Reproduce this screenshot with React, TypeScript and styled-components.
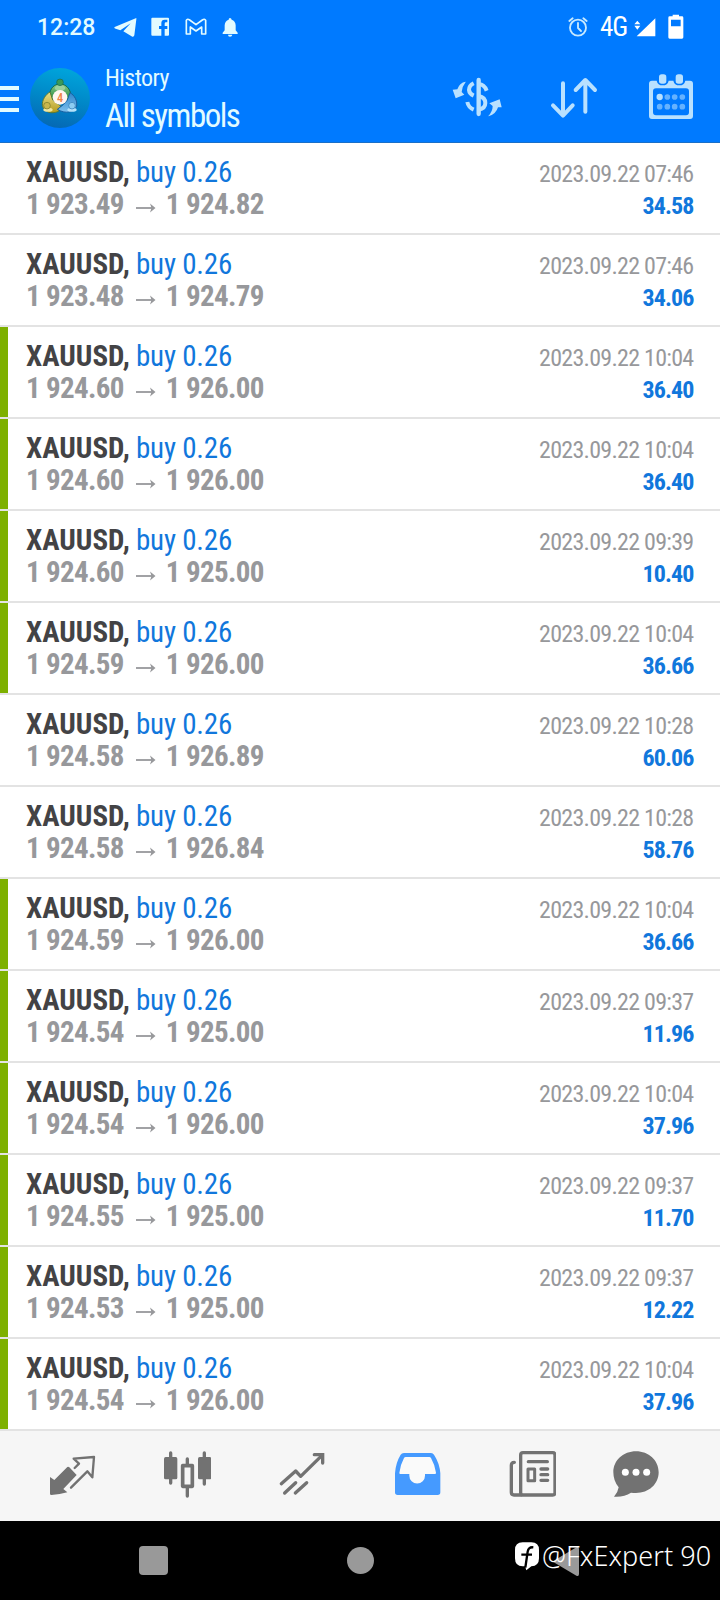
import React from "react";
import styled, { createGlobalStyle } from "styled-components";

const GlobalStyle = createGlobalStyle`
  * { box-sizing: border-box; }
  body { margin: 0; background: #fff; }
`;

const Screen = styled.div`
  width: 720px;
  height: 1600px;
  display: flex;
  flex-direction: column;
  overflow: hidden;
  background: #fff;
  font-family: "Roboto Condensed", Roboto, sans-serif;
  font-stretch: 75%;
`;

const Header = styled.header`
  height: 143px;
  background: #007aff;
  color: #e2fbff;
  border-bottom: 1px solid #1a6fc8;
`;

const StatusBar = styled.div`
  height: 52px;
  display: flex;
  align-items: center;
  padding: 2px 36px 0 37px;
`;

const Clock = styled.span`
  width: 77px;
  padding-top: 1px;
  font: 500 23px/26px Roboto, sans-serif;
  font-stretch: 100%;
`;

const StatusIcons = styled.div`
  display: flex;
  gap: 10.8px;
`;

const StatusRight = styled.div`
  display: flex;
  align-items: center;
  margin-left: auto;
  color: #fff;
`;

const Network = styled.span`
  width: 33px;
  margin-left: 11px;
  font-size: 27px;
  line-height: 28px;
  font-weight: 450;
  letter-spacing: -1px;
`;

const Toolbar = styled.div`
  display: flex;
  height: 90px;
`;

const MenuButton = styled.div`
  width: 19px;
  padding-top: 34px;
  display: flex;
  flex-direction: column;
  gap: 7px;
`;

const MenuBar = styled.i`
  height: 4px;
  background: #e2fbff;
`;

const Logo = styled.svg`
  margin: 16px 0 0 11px;
  width: 60px;
  height: 60px;
`;

const Titles = styled.div`
  margin-left: 15px;
  padding-top: 12px;
`;

const Subtitle = styled.div`
  font-size: 24px;
  line-height: 28px;
  letter-spacing: -0.55px;
  margin-bottom: 4px;
`;

const Title = styled.div`
  font-size: 33px;
  line-height: 40px;
  letter-spacing: -1.5px;
  white-space: nowrap;
`;

const Actions = styled.div`
  display: flex;
  gap: 46px;
  margin: 22px 26px 0 auto;
  color: #b9e1ff;
  svg:last-child { margin: -1px 0 0 2px; }
`;

const List = styled.main`
  display: flex;
  flex-direction: column;
`;

const Row = styled.div<{ $marked: boolean }>`
  height: 92px;
  display: flex;
  justify-content: space-between;
  padding: 13px 26.5px 0 26px;
  border-bottom: 2px solid #e3e3e3;
  position: relative;
  &::before {
    content: "";
    position: absolute;
    left: 0;
    top: 0;
    bottom: 0;
    width: 7.5px;
    background: ${(p) => (p.$marked ? "#7db000" : "transparent")};
  }
`;

const Line = styled.div`
  font-size: 29px;
  line-height: 32px;
  white-space: nowrap;
  display: flex;
`;

const Symbol = styled.span`
  font-weight: 700;
  color: #434345;
  width: 110px;
`;

const Side = styled.span`
  color: #1177dc;
  letter-spacing: -0.2px;
`;

const Price = styled.span`
  font-weight: 700;
  color: #97989b;
  letter-spacing: -0.65px;
`;

const Arrow = styled.svg`
  width: 20px;
  height: 10px;
  margin: 15px 10px 0 12px;
`;

const Meta = styled.div`
  padding-top: 2px;
  text-align: right;
  font-size: 24px;
  line-height: 32px;
  letter-spacing: -0.72px;
  color: #97989b;
`;

const Profit = styled.div`
  font-weight: 700;
  letter-spacing: -0.9px;
  color: #1177dc;
`;

const TabBar = styled.nav`
  height: 90px;
  display: flex;
  gap: 67px;
  padding: 19px 0 0 48px;
  background: #f6f6f6;
  color: #727272;
  svg:last-child { margin-left: -11px; }
`;

const SystemBar = styled.footer`
  height: 79px;
  background: #000;
  position: relative;
  display: flex;
  align-items: flex-start;
  padding: 25px 0 0 139px;
`;

const Recents = styled.div`
  width: 29px;
  height: 29px;
  border-radius: 4px;
  background: #999;
`;

const Home = styled.div`
  width: 27px;
  height: 27px;
  margin: 1px 0 0 179px;
  border-radius: 50%;
  background: #999;
`;

const Back = styled.svg`
  margin-left: 178px;
  width: 28px;
  height: 31px;
`;

const Watermark = styled.div`
  position: absolute;
  left: 514px;
  top: 16px;
  display: flex;
  align-items: center;
  color: #fff;
  font: 350 27px/38px "Noto Sans", sans-serif;
  white-space: nowrap;
`;

const Handle = styled.span`
  margin-left: 2px;
  letter-spacing: 0.05px;
`;

const Spacer = styled.span`
  width: 11px;
`;

type IconProps = { w: number; h: number; box: string; children: React.ReactNode };
const Icon = ({ w, h, box, children }: IconProps) => (
  <svg width={w} height={h} viewBox={box} fill="currentColor">
    {children}
  </svg>
);

const stroke = (width: number) => ({
  fill: "none",
  stroke: "currentColor",
  strokeWidth: width,
  strokeLinecap: "round" as const,
  strokeLinejoin: "round" as const,
});

const trades: [string, string, string, string, boolean][] = [
  ["1 923.49", "1 924.82", "07:46", "34.58", false],
  ["1 923.48", "1 924.79", "07:46", "34.06", false],
  ["1 924.60", "1 926.00", "10:04", "36.40", true],
  ["1 924.60", "1 926.00", "10:04", "36.40", true],
  ["1 924.60", "1 925.00", "09:39", "10.40", true],
  ["1 924.59", "1 926.00", "10:04", "36.66", true],
  ["1 924.58", "1 926.89", "10:28", "60.06", false],
  ["1 924.58", "1 926.84", "10:28", "58.76", false],
  ["1 924.59", "1 926.00", "10:04", "36.66", true],
  ["1 924.54", "1 925.00", "09:37", "11.96", true],
  ["1 924.54", "1 926.00", "10:04", "37.96", true],
  ["1 924.55", "1 925.00", "09:37", "11.70", true],
  ["1 924.53", "1 925.00", "09:37", "12.22", true],
  ["1 924.54", "1 926.00", "10:04", "37.96", true],
];

const AppLogo = () => (
  <Logo viewBox="0 0 180 180">
    <defs>
      <linearGradient id="disc" x1="0.6" y1="0" x2="0.4" y2="1">
        <stop offset="0" stopColor="#00a5dc" />
        <stop offset="0.5" stopColor="#0088c8" />
        <stop offset="1" stopColor="#0568b4" />
      </linearGradient>
      <linearGradient id="green" x1="0" y1="0" x2="0" y2="1">
        <stop offset="0" stopColor="#8cc98c" />
        <stop offset="1" stopColor="#1f8a3a" />
      </linearGradient>
      <linearGradient id="gold" x1="0" y1="0" x2="0" y2="1">
        <stop offset="0" stopColor="#e8e08a" />
        <stop offset="1" stopColor="#b59a1c" />
      </linearGradient>
      <linearGradient id="sky" x1="0" y1="0" x2="0" y2="1">
        <stop offset="0" stopColor="#2f86cc" />
        <stop offset="1" stopColor="#7cc0ee" />
      </linearGradient>
    </defs>
    <circle cx="90" cy="90" r="90" fill="url(#disc)" />
    <path d="M58 82C60 62 72 48 90 48S121 62 123 84L112 96H68Z" fill="url(#green)" stroke="#176b45" strokeWidth="3" />
    <path d="M60 72C46 80 36 96 37 112C42 132 62 140 86 130L92 114L68 96Z" fill="url(#gold)" stroke="#5d7a33" strokeWidth="3" />
    <path d="M120 74C134 82 142 98 140 114C134 132 108 140 82 124L100 110L112 96Z" fill="url(#sky)" stroke="#1a5fa0" strokeWidth="3" />
    <ellipse cx="90" cy="60" rx="16" ry="9" fill="#9bd09b" />
    <circle cx="90" cy="43" r="10" fill="#3a9a58" stroke="#1a6a50" strokeWidth="2" />
    <ellipse cx="54" cy="125" rx="14" ry="6" fill="#f0e6a0" />
    <circle cx="51" cy="113" r="10" fill="#c9b64c" stroke="#75792a" strokeWidth="2" />
    <ellipse cx="126" cy="125" rx="14" ry="6" fill="#b4e2fa" />
    <circle cx="126" cy="113" r="10" fill="#8ccdf2" stroke="#2e78b5" strokeWidth="2" />
    <circle cx="90" cy="88" r="22" fill="#fff6f0" />
    <text x="90" y="101" textAnchor="middle" fontFamily="Roboto, sans-serif" fontWeight="500" fontSize="37" fill="#ee8246">4</text>
  </Logo>
);

export default function App() {
  return (
    <>
      <GlobalStyle />
      <Screen>
        <Header>
          <StatusBar>
            <Clock>12:28</Clock>
            <StatusIcons>
              <Icon w={24} h={24} box="342 44 72 72">
                <path d="M409 53L344 80Q341 83 347 85L361 90L392 69L370 93L397 109Q402 110 403 105L409 57Z" />
              </Icon>
              <Icon w={24} h={24} box="447 44 72 72">
                <path fillRule="evenodd" d="M457 52H504Q507 52 507 55V103Q507 106 504 106H494V86H502V77H494V70Q494 66 498 66H502V58H494Q484 58 484 68V77H477V86H484V106H457Q454 106 454 103V55Q454 52 457 52Z" />
              </Icon>
              <Icon w={24} h={24} box="551 44 72 72">
                <path {...stroke(5)} d="M558 60Q561 54 568 59L587 73L606 59Q613 54 616 60V101H604V80L587 92L570 80V101H558Z" />
              </Icon>
              <Icon w={24} h={24} box="655 44 72 72">
                <path d="M669 101V97L675 90V75Q676 61 687 58Q687 53 691 53T696 58Q707 61 708 75V90L714 97V101ZM685 103H698Q697 109 691 109T685 103Z" />
              </Icon>
            </StatusIcons>
            <StatusRight>
              <Icon w={22} h={22} box="381 47 66 66">
                <g {...stroke(5.5)} stroke="#c8eaff">
                  <circle cx="414" cy="82" r="24" />
                  <path d="M414 68V83L423 92M388 62L398 54M440 62L430 54" />
                </g>
              </Icon>
              <Network>4G</Network>
              <Icon w={24} h={24} box="578 44 72 72">
                <path d="M645 54V108H589ZM591 61L600 72H582ZM582 76H600L591 88Z" />
              </Icon>
              <Spacer />
              <Icon w={16} h={26} box="683 40 48 78">
                <path fillRule="evenodd" d="M697 42H716V47H725Q729 47 729 51V110Q729 114 725 114H688Q684 114 684 110V51Q684 47 688 47H697ZM692 57V77H721V57Z" />
              </Icon>
            </StatusRight>
          </StatusBar>
          <Toolbar>
            <MenuButton>
              <MenuBar />
              <MenuBar />
              <MenuBar />
            </MenuButton>
            <AppLogo />
            <Titles>
              <Subtitle>History</Subtitle>
              <Title>All symbols</Title>
            </Titles>
            <Actions>
              <Icon w={50} h={48} box="36 222 150 144">
                <path d="M77 245Q58 248 52 268L38 269L47 295L73 284L65 276Q66 260 77 246Z" />
                <path d="M145 349Q168 343 174 322L185 322L179 298L148 310L158 318Q158 334 145 348Z" />
                <path {...stroke(13)} d="M116 240V342" />
                <path {...stroke(12)} strokeLinecap="butt" d="M101 250Q87 257 87 270Q88 281 101 287M82 306Q85 322 101 329M116 253Q132 252 140 272M116 288Q136 292 136 309Q136 325 116 329" />
              </Icon>
              <Icon w={52} h={48} box="324 222 156 144">
                <path {...stroke(12)} d="M369 250V345M339 316L369 347L398 316M436 335V242M407 270L436 240L465 270" />
              </Icon>
              <Icon w={46} h={48} box="624 219 138 144">
                <path fillRule="evenodd" d="M636 242H650Q653 256 668 256T686 242H700Q703 256 718 256T736 242H750Q759 242 759 251V348Q759 357 750 357H636Q627 357 627 348V251Q627 242 636 242ZM648 265Q639 265 639 274V337Q639 346 648 346H738Q747 346 747 337V274Q747 265 738 265Z" />
                <rect x="657" y="223" width="22" height="28" rx="8" />
                <rect x="707" y="223" width="22" height="28" rx="8" />
                <circle cx="659" cy="291" r="9.5" />
                <g opacity="0.55">
                  <circle cx="682" cy="291" r="8.5" />
                  <circle cx="704" cy="291" r="8.5" />
                  <circle cx="727" cy="291" r="8.5" />
                  <circle cx="659" cy="320" r="8.5" />
                  <circle cx="682" cy="320" r="8.5" />
                  <circle cx="704" cy="320" r="8.5" />
                  <circle cx="727" cy="320" r="8.5" />
                </g>
              </Icon>
            </Actions>
          </Toolbar>
        </Header>
        <List>
          {trades.map(([open, close, time, profit, marked], i) => (
            <Row key={i} $marked={marked}>
              <div>
                <Line>
                  <Symbol>XAUUSD,</Symbol>
                  <Side>buy 0.26</Side>
                </Line>
                <Line>
                  <Price>{open}</Price>
                  <Arrow viewBox="0 0 20 10">
                    <path d="M0 5H18" fill="none" stroke="#97989b" strokeWidth="1.8" />
                    <path d="M14 0.500L19.500 5L14 9.500L15.500 5Z" fill="#97989b" />
                  </Arrow>
                  <Price>{close}</Price>
                </Line>
              </div>
              <Meta>
                <div>2023.09.22 {time}</div>
                <Profit>{profit}</Profit>
              </Meta>
            </Row>
          ))}
        </List>
        <TabBar>
          <Icon w={48} h={48} box="144 120 144 144">
            <path d="M150 201L163 210L202 171Q205 169 208 172L230 195L190 237L202 247Q180 253 154 255Q150 255 150 251Z" />
            <path {...stroke(7)} d="M213 233L262 184L277 202L282 141L221 146L237 161L224 174" />
          </Icon>
          <Icon w={48} h={48} box="489 120 144 144">
            <path {...stroke(10)} d="M512 129V219M613 129V222M562 147V163M562 235V258" />
            <rect x="492" y="141" width="40" height="67" rx="5" />
            <rect x="594" y="141" width="40" height="67" rx="5" />
            <rect x="548" y="167" width="29" height="62" {...stroke(11)} />
          </Icon>
          <Icon w={48} h={48} box="114 120 144 144">
            <path {...stroke(10)} d="M124 221L167 183L182 199L246 136M134 249L167 218M166 249L200 218" />
            <path {...stroke(10)} strokeLinejoin="miter" d="M223 134H248V159" />
          </Icon>
          <Icon w={48} h={48} box="459 120 144 144">
            <path fill="#459aff" d="M492 129H573Q579 129 582 134Q599 160 601 190V247Q601 255 593 255H473Q465 255 465 247V190Q467 158 482 134Q485 129 492 129Z" />
            <path fill="#fafafa" d="M497 141Q494 141 492 144Q481 164 478 189Q478 192 481 192H508V197A23.500 23.500 0 0 0 555 197V192H585Q588 192 588 188Q584 163 573 144Q571 141 568 141Z" />
          </Icon>
          <Icon w={48} h={48} box="84 120 144 144">
            <rect x="122" y="128" width="103" height="127" rx="7" {...stroke(10)} />
            <path {...stroke(10)} d="M103 157Q94 157 94 166V247Q94 255 102 255H124M145 155H202M183 177H203M183 194H203M183 211H203" />
            <rect x="144" y="177" width="20" height="35" {...stroke(9)} />
          </Icon>
          <Icon w={48} h={48} box="396 120 144 144">
            <path d="M468 124C506 124 536 151 536 187S506 249 468 249Q460 249 453 248Q432 262 402 260Q414 247 416 232Q400 213 400 187C400 151 430 124 468 124Z" />
            <g fill="#fff">
              <circle cx="436" cy="187" r="10.500" />
              <circle cx="468" cy="187" r="10.500" />
              <circle cx="500" cy="187" r="10.500" />
            </g>
          </Icon>
        </TabBar>
        <SystemBar>
          <Recents />
          <Home />
          <Back viewBox="0 0 28 31">
            <path d="M24 1.500Q27 0 27 3V28Q27 31 24 29.500L3 17Q0 15.500 3 14Z" fill="#999" />
          </Back>
          <Watermark>
            <Icon w={26} h={30} box="102 398 78 90">
              <path d="M128 402H154Q177 402 177 425V450Q177 473 154 474L139 486L135 474H128Q105 474 105 450V425Q105 402 128 402Z" />
              <path fill="none" stroke="#000" strokeWidth="7" d="M124 439H156M160 417Q145 415 143 430L136 478" />
            </Icon>
            <Handle>@FxExpert 90</Handle>
          </Watermark>
        </SystemBar>
      </Screen>
    </>
  );
}
